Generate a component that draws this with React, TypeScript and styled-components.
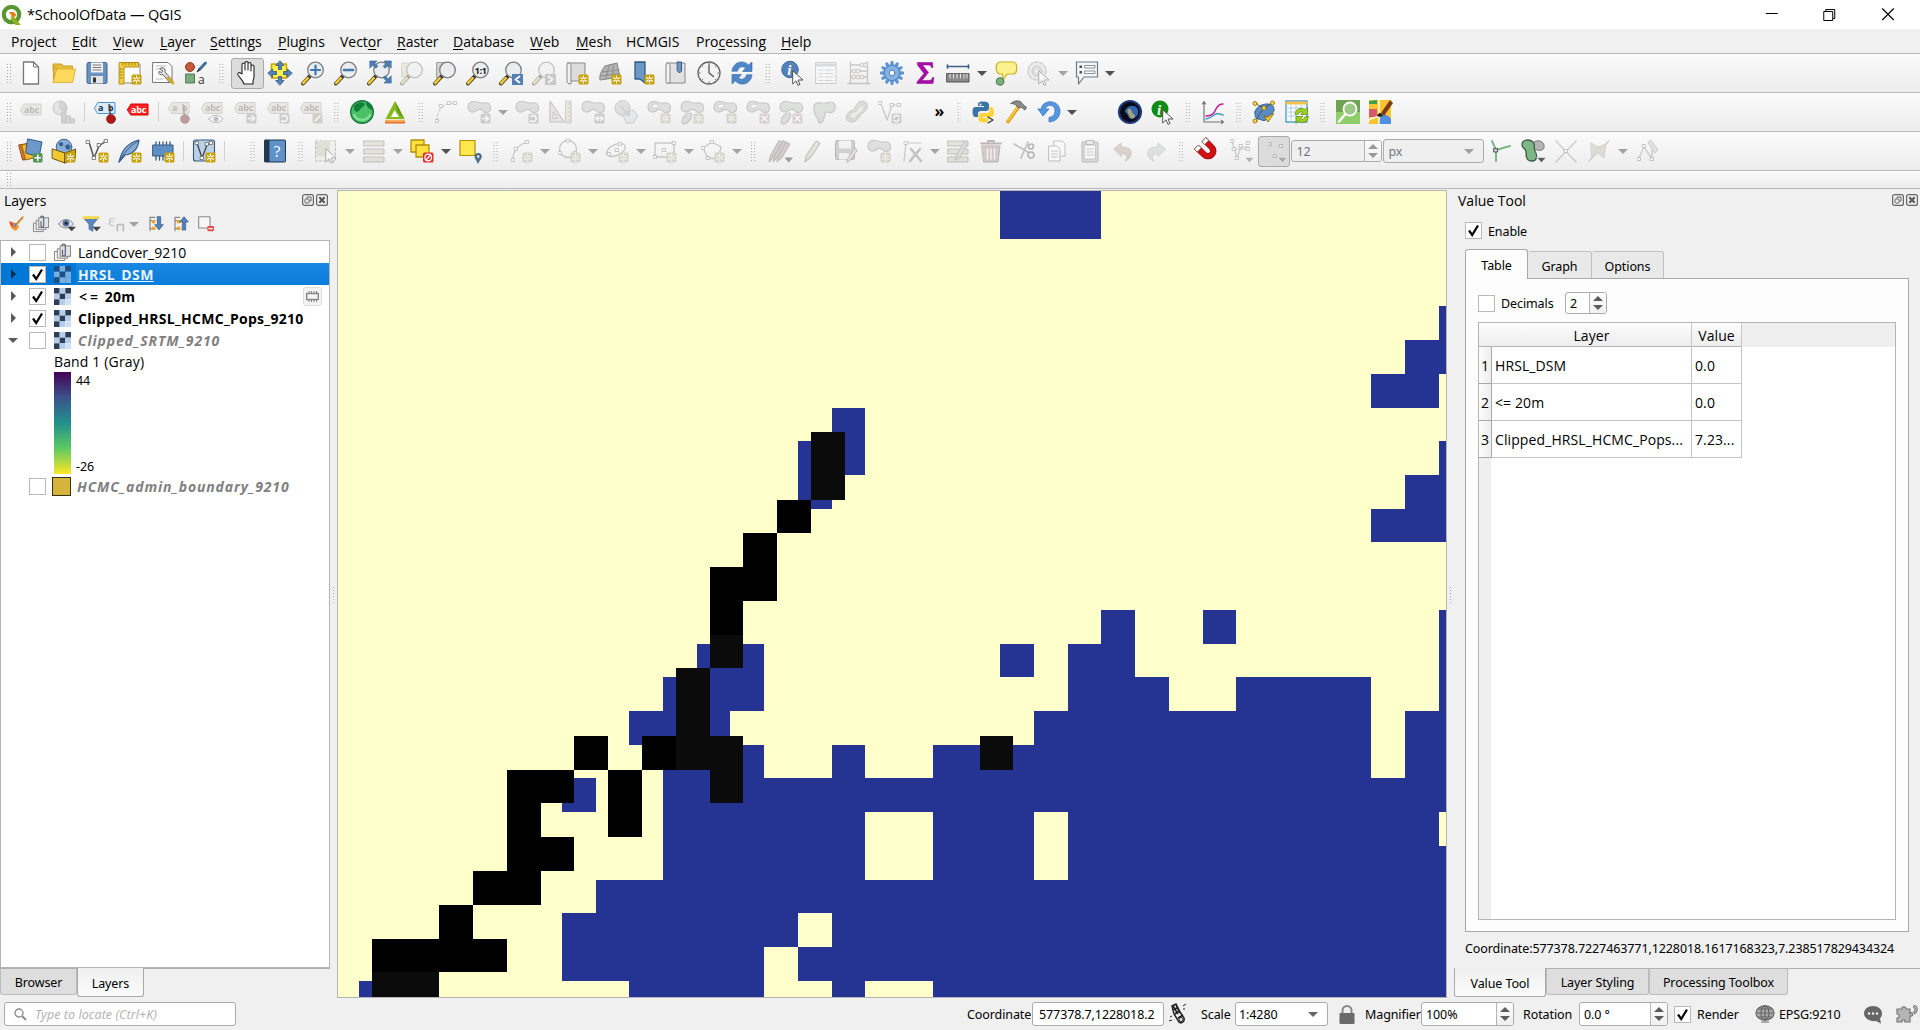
import React from "react";
import styled, { createGlobalStyle, css } from "styled-components";

const GlobalStyle = createGlobalStyle`
  *, *::before, *::after { box-sizing: border-box; }
  html, body { margin: 0; padding: 0; overflow: hidden; background: #f0f0f0; }
  body { font-family: "Open Sans", "Noto Sans", sans-serif; font-size: 14px; color: #000; }
`;

/* ---------- shell ---------- */

const Window = styled.div`
  width: 1920px;
  height: 1030px;
  display: flex;
  flex-direction: column;
  background: #f0f0f0;
  overflow: hidden;
  white-space: nowrap;
`;

const TitleBar = styled.header`
  height: 29px;
  flex: none;
  display: flex;
  align-items: center;
  padding-bottom: 1px;
  background: #fff;
  font-size: 14.5px;
`;
const TitleText = styled.span`
  margin-left: 4px;
  flex: 1;
  letter-spacing: -0.12px;
`;
const WindowControls = styled.div`
  display: flex;
  width: 178px;
  svg { width: 58.5px; height: 28px; flex: none; }
`;

const MenuBar = styled.nav`
  height: 24px;
  flex: none;
  display: flex;
  align-items: center;
  padding: 2px 0 0 11px;
  background: #f0f0f0;
  font-size: 14px;
  line-height: 20px;
`;
const MenuItem = styled.span<{ $w: number }>`
  width: ${(p) => p.$w}px;
  flex: none;
  letter-spacing: -0.02px;
  u { text-underline-offset: 2px; text-decoration-thickness: 1px; }
`;

const ToolBar = styled.div<{ $h: number }>`
  height: ${(p) => p.$h}px;
  flex: none;
  display: flex;
  align-items: center;
  padding-left: 3px;
  border-top: 1px solid #b9b9b9;
  background: linear-gradient(#fbfbfb, #ededed);
`;
const Handle = styled.i<{ $w: number; $h?: number }>`
  width: ${(p) => p.$w}px;
  height: ${(p) => p.$h ?? 20}px;
  flex: none;
  background-image: radial-gradient(circle, #aaa 0.7px, transparent 0.9px);
  background-size: 3px 3px;
  background-position: 0 0;
  background-clip: content-box;
  padding: 0 ${(p) => (p.$w - 5) / 2}px;
`;
const Separator = styled.i<{ $w?: number }>`
  width: ${(p) => p.$w ?? 8}px;
  height: 20px;
  flex: none;
  display: flex;
  justify-content: center;
  &::before { content: ""; width: 1px; background: #d2d2d2; }
`;
const Gap = styled.i<{ $w: number }>`
  width: ${(p) => p.$w}px;
  flex: none;
`;
const Tool = styled.span<{ $pressed?: boolean; $off?: boolean; $w?: number }>`
  width: ${(p) => p.$w ?? 33}px;
  height: 31px;
  flex: none;
  display: flex;
  align-items: center;
  justify-content: center;
  border: 1px solid transparent;
  svg { width: 24px; height: 24px; overflow: visible; opacity: ${(p) => (p.$off ? 0.41 : 1)}; ${(p) => p.$off && "filter: saturate(0.5);"} }
  ${(p) =>
    p.$pressed &&
    css`
      border-color: #aaa;
      border-radius: 3px;
      background: #dcdcdc;
    `}
`;
const ArrowBox = styled.span<{ $w: number; $c: string }>`
  width: ${(p) => p.$w}px;
  flex: none;
  display: flex;
  justify-content: center;
  &::before {
    content: "";
    border: 5px solid transparent;
    border-bottom: 0;
    border-top-color: ${(p) => p.$c};
  }
`;
const More = styled.b`
  width: 22px;
  font-size: 16px;
  line-height: 20px;
  text-align: center;
  padding-bottom: 3px;
`;

/* ---------- icon parts ---------- */

const I = ({ children }: { children: React.ReactNode }) => (
  <svg viewBox="0 0 24 24" fill="none" strokeLinecap="round" strokeLinejoin="round">{children}</svg>
);
const Star = ({ c = "#c8a20a" }: { c?: string }) => (
  <g>
    <rect x="13.5" y="13.5" width="10" height="10" rx="1.5" fill={c} />
    <path d="M18.5 15v7M15.5 16.8l6 3.5M21.5 16.8l-6 3.5" stroke="#fff" strokeWidth="1.2" />
    <circle cx="18.5" cy="18.5" r="1" fill={c} />
  </g>
);
const Badge = ({ c = "#999", d }: { c?: string; d: string }) => (
  <g>
    <rect x="13.5" y="13.5" width="10" height="10" rx="1.5" fill={c} />
    <path d={d} stroke="#fff" strokeWidth="1.6" />
  </g>
);
const ARROW_R = "M15.5 18.5h6M19 16l2.5 2.5L19 21";
const ARROW_LR = "M15 18.5h7M17 16.5l-2 2 2 2M20 16.5l2 2-2 2";
const TURN = "M16 20.5a3 3 0 1 0 0-4M15.6 21.5h2";
const CROSS = "M16 16l5 5M21 16l-5 5";
const PEN = "M16 21l5-5";
const Lens = ({ fill = "#e9edf0", children }: { fill?: string; children?: React.ReactNode }) => (
  <g>
    <path d="M2 22.5l6.5-7" stroke="#333" strokeWidth="4" />
    <path d="M2.2 22l4.6-4.8" stroke="#f5c92a" strokeWidth="2.6" />
    <circle cx="14.5" cy="9" r="7.8" fill={fill} stroke="#7d7d7d" strokeWidth="1.3" />
    {children}
  </g>
);
const Blob = () => (
  <path d="M1 7c0-4 3-6 7-5.500 3 .5 6 2 9 1.500 5-.8 7 2 6.500 6-.5 4-6 4.500-7.500 2-1.500-2-4.500-2-6.500-.5C6 13.500 1 12 1 7z" fill="#bcc2bc" stroke="#868b86" strokeWidth="1.200" />
);
const Ring = () => (
  <g>
    <Blob />
    <path d="M4.500 6.500c0-2 2-2.500 4-2.500s4 1 3 2.500-7 3-7 0z" fill="#f8f8f8" stroke="#868b86" />
  </g>
);
const Lobe = () => <path d="M2 22c0-5 4-9 8-9s0 8-3 10-5 0-5-1z" fill="#bcc2bc" stroke="#868b86" strokeWidth="1.200" />;
const Tag = ({ fill = "#d9d4bb", line = "#a7a187", text = "abc", ink = "#666" }: { fill?: string; line?: string; text?: string; ink?: string }) => (
  <g>
    <path d="M1.500 8l3.500-5.500h17v11H5z" fill={fill} stroke={line} />
    <text x="5" y="11.200" fontSize="9" fontWeight="700" fontFamily="Open Sans" fill={ink} textLength="15.500">{text}</text>
  </g>
);
const Pin = () => (
  <g>
    <path d="M17 6v9" stroke="#444" strokeWidth="1.4" />
    <circle cx="18" cy="19" r="4.500" fill="#b01818" stroke="#7c1010" strokeWidth=".6" />
  </g>
);
const Cursor = () => <path d="M12 10l10 9h-5l2 4.500-2 .8-2-4.500-3 3z" fill="#fff" stroke="#555" />;
const Nodes = ({ pts }: { pts: number[][] }) => (
  <g>{pts.map(([x, y], i) => <rect key={i} x={x - 1.5} y={y - 1.5} width="3" height="3" fill="#fff" stroke="#777" strokeWidth=".9" />)}</g>
);
const Corner = () => <path d="M16 18.500h9l-4.500 5z" fill="#5c5c5c" stroke="#fff" strokeWidth=".5" />;
const teeth = [0, 30, 60, 90, 120, 150, 180, 210, 240, 270, 300, 330];

const icons: Record<string, React.ReactNode> = {
  newFile: <><path d="M4.500 1h10l5 5v17h-15z" fill="#fff" stroke="#777" strokeWidth="1.300" /><path d="M14.500 1v5h5" stroke="#777" /></>,
  open: <><path d="M1.500 3h8l2 2h9v5h-19z" fill="#e6bd3c" stroke="#c99e25" /><path d="M1.500 5v16h2L6 9z" fill="#e6bd3c" stroke="#c99e25" /><path d="M5 8h18.500l-3 13.500h-19z" fill="#ffd95d" stroke="#dfb335" /></>,
  save: <><rect x="2" y="1.500" width="20" height="21" rx="1.500" fill="#6a92c0" stroke="#3e658f" /><rect x="6" y="1.500" width="12" height="10" fill="#f4f4f4" /><path d="M8 4h8M8 6.500h8M8 9h8" stroke="#777" /><rect x="6" y="15" width="12" height="7.500" fill="#e4e4e4" /><rect x="8" y="16.500" width="3" height="5" fill="#333" /></>,
  layout: <><rect x="5" y="3" width="17" height="19" fill="#fff" stroke="#888" /><path d="M1.500 1.500h19v4.500H6v17H1.500z" fill="#f2cf3a" stroke="#b38f12" /><path d="M5 2v2M8 2v2M11 2v2M14 2v2M17 2v2M2 8h2M2 11h2M2 14h2M2 17h2" stroke="#8a6d08" strokeWidth=".8" /><Star /></>,
  layoutMgr: <><path d="M2 1.500h15l4 4v16H2z" fill="#fff" stroke="#777" /><path d="M5 5h10M5 8h4M5 18h7" stroke="#bbb" /><path d="M9 7.500c3-2 6 0 5 3.500l7.500 8.500-2.500 2.500-7-8.500c-3 1-5-1-4-3l2.500 1 1-1.500z" fill="#e2e2e2" stroke="#666" /><path d="M17 17l5 5" stroke="#d9a928" strokeWidth="3" /></>,
  style: <><circle cx="6" cy="6" r="4.500" fill="#c65a3a" stroke="#8c3c22" /><path d="M15.500 8.500l6-6.500" stroke="#48709c" strokeWidth="3" /><path d="M13.500 10.500l1.500-2" stroke="#333" strokeWidth="1.500" /><rect x="2" y="13" width="8.500" height="9" fill="#7cab80" stroke="#4e7a52" /><text x="14" y="22.500" fontSize="12" fontFamily="Open Sans" fill="#333">a</text></>,
  hand: <path d="M7 13L7 3.500c0-2 3-2 3 0V9V2c0-2 3-2 3 0v7V3c0-2 3-2 3 0v7V5.500c0-2 3-2 3 0V16c0 2-1 3-1 4v3H9c-1-4-4-6-6-9-1-2 1-3 2.500-2z" fill="#fff" stroke="#222" strokeWidth="1.100" />,
  panSel: <><rect x="3.500" y="3" width="15" height="14" fill="#fff04a" stroke="#cba100" strokeWidth="1.500" /><path d="M12 0l4 4.500h-2.500v4h-3v-4H8zM12 24l4-4.500h-2.500v-4h-3v4H8zM0 12l4.500-4v2.500h4v3h-4V16zM24 12l-4.500-4v2.500h-4v3h4V16z" fill="#5583b9" stroke="#2d5687" strokeWidth=".8" /></>,
  zoomIn: <Lens><path d="M14.500 4.500v9M10 9h9" stroke="#4477ad" strokeWidth="2.200" /></Lens>,
  zoomOut: <Lens><path d="M10 9h9" stroke="#4477ad" strokeWidth="2.600" /></Lens>,
  zoomFull: <><Lens /><path d="M3 0h7l-2.200 2.200 3 3-2 2-3-3L3 7zM24 0h-7l2.200 2.200-3 3 2 2 3-3L24 7zM24 22h-7l2.200-2.200-3-3 2-2 3 3L24 15z" fill="#4f7fb6" stroke="#2f5b8e" strokeWidth=".6" /></>,
  zoomSel: <><rect x="2" y="2" width="11" height="14" fill="#e2d98c" stroke="#aaa" /><Lens /></>,
  zoomLayer: <><rect x="4" y="1.500" width="13" height="15" fill="#d4d4d4" stroke="#999" /><Lens /></>,
  zoomNative: <Lens><text x="8.500" y="12.500" fontSize="9.500" fontWeight="700" fontFamily="Open Sans" fill="#222" textLength="12.500">1:1</text></Lens>,
  zoomLast: <><Lens /><rect x="13" y="13" width="11" height="11" fill="#4f7fb6" /><path d="M20.500 15.500l-4 3 4 3" stroke="#fff" strokeWidth="1.800" /></>,
  zoomNext: <><Lens /><rect x="13" y="13" width="11" height="11" fill="#8f8f8f" /><path d="M16.500 15.500l4 3-4 3" stroke="#fff" strokeWidth="1.800" /></>,
  newMap: <><path d="M3 2h17v18H3z" fill="#dcdcdc" stroke="#8b8b8b" /><path d="M3 2c3 0 3 2 3 3v18c-3 0-4-1-4-3V4c0-1 0-2 1-2z" fill="#f0f0f0" stroke="#8b8b8b" /><Star /></>,
  new3d: <><path d="M7 5l12-3 3 14-20 3c-1-4 1-9 5-14z" fill="#b4b4b4" stroke="#858585" /><path d="M4 11l17-2M2.500 15l19-2.500M11 4L8 18M15 3v13" stroke="#858585" strokeWidth=".8" /><Star /></>,
  bookmark: <><path d="M4 1h10v21l-5-4-5 0z" fill="#6d97c7" stroke="#34587f" strokeWidth="1.300" /><Star /></>,
  bookmarks: <><path d="M3 2h18v20H3z" fill="#e2e2e2" stroke="#888" /><path d="M3 2c3 0 3 2 3 3v17H3c-1 0-1-1-1-2V4z" fill="#f2f2f2" stroke="#888" /><path d="M13.500 1h4v9l-2 2-2-2z" fill="#6d97c7" stroke="#34587f" /></>,
  clock: <><circle cx="12" cy="12" r="11" fill="#f3f3f3" stroke="#666" strokeWidth="1.300" /><path d="M12 4v8l4.500 3.500" stroke="#555" strokeWidth="1.300" /><path d="M12 2.500v.5M21 12h.5M12 21v.5M2.500 12h.5M5.500 5.500l.3.300M18.500 5.500l-.3.300M5.500 18.500l.3-.3M18.500 18.500l-.3-.3" stroke="#555" /></>,
  refresh: <><path d="M2 10c1-9 11-12 16.500-6L22 1v9.500h-9.500l3-3.500c-3-2.500-7-1-8 3z" fill="#4f87c7" stroke="#2d66a8" strokeWidth=".6" /><path d="M22 14c-1 9-11 12-16.500 6L2 23v-9.500h9.500l-3 3.500c3 2.500 7 1 8-3z" fill="#4f87c7" stroke="#2d66a8" strokeWidth=".6" /></>,
  identify: <><circle cx="9" cy="8.500" r="8.300" fill="#5482b8" stroke="#416d9f" /><text x="6.200" y="14" fontSize="15" fontWeight="700" fontStyle="italic" fontFamily="Liberation Serif" fill="#fff">i</text><Cursor /></>,
  table: <><rect x="2" y="1.500" width="20" height="21" fill="#fff" stroke="#999" /><path d="M3 4h18" stroke="#aab8c8" strokeWidth="3" /><path d="M5 9h4M5 12.500h4M5 16h4M5 19.500h4M11 9h8M11 12.500h8M11 16h8M11 19.500h8" stroke="#aaa" /></>,
  abacus: <><path d="M3.500 1v21M20.500 1v21M1 22.500h22M3.500 4h17M3.500 10h17M3.500 16h17" stroke="#888" strokeWidth="1.300" /><g fill="#eee" stroke="#a77"><circle cx="15" cy="4" r="2" /><circle cx="18.500" cy="4" r="2" /><circle cx="7" cy="10" r="2" /><circle cx="11" cy="10" r="2" /><circle cx="7" cy="16" r="2" /><circle cx="11" cy="16" r="2" /><circle cx="15" cy="16" r="2" /></g></>,
  gear: <><g fill="#6093d1">{teeth.map((a) => <path key={a} d="M10.800 0h2.400l1 5.500h-4.400z" transform={`rotate(${a} 12 12)`} />)}</g><circle cx="12" cy="12" r="7.600" fill="#86b1e2" stroke="#4f86c8" /><circle cx="12" cy="12" r="2.800" fill="#fff" stroke="#4d83c3" /></>,
  sigma: <path d="M4.500 1.500h15l.5 5h-1.500c-.5-2-1.500-2.500-3.500-2.500H9.500l6 7.500-6.500 8h7c2 0 3-1 3.500-3H21l-1 6H4v-1.500l7-8.500-6.500-8.500z" fill="#a80da8" stroke="#8a078a" strokeWidth=".5" />,
  measure: <><path d="M1.500 5.500h21M1.500 4v3M22.500 4v3" stroke="#3d5f88" strokeWidth="1.700" /><rect x="1" y="12.500" width="22" height="8.500" fill="#8a8a8a" stroke="#555" /><path d="M4 13v4M7.500 13v4M11 13v4M14.500 13v4M18 13v4M21 13v4" stroke="#eee" strokeWidth=".9" /></>,
  tips: <><path d="M6 1h13c5 0 5 12 0 12h-6l-4 6-.5-6H6C1 13 1 1 6 1z" fill="#fbf18e" stroke="#c8b21c" strokeWidth="1.200" /><circle cx="6" cy="20.500" r="3.800" fill="#78ad7c" stroke="#4e7c52" /></>,
  action: <><circle cx="10" cy="10" r="9" fill="#ddd" stroke="#999" strokeWidth="1.500" strokeDasharray="3 2" /><circle cx="10" cy="10" r="5" fill="#bbb" stroke="#999" /><path d="M8.500 7.500l4 2.500-4 2.500z" fill="#fff" /><Cursor /></>,
  annot: <><path d="M1.500 1h21v15H9l-5.500 7v-7h-2z" fill="#f5f6f7" stroke="#6c7a86" strokeWidth="1.200" /><rect x="4.500" y="4.500" width="2.500" height="2.500" fill="#456" /><rect x="4.500" y="10" width="2.500" height="2.500" fill="#456" /><path d="M10 4.500h10v2.500H10zM10 10h10v2.500H10z" fill="#fff" stroke="#6c7a86" strokeWidth=".8" /></>,

  tag: <g transform="translate(0 1.500)"><Tag /></g>,
  diagram: <><circle cx="8" cy="8" r="7" fill="#c3cfc3" stroke="#888" /><path d="M8 8V1a7 7 0 0 1 6 10z" fill="#c99" stroke="#888" /><path d="M10 12h4v11h-4z" fill="#c99" stroke="#888" /><path d="M14.500 16h4v7h-4z" fill="#9ab29a" stroke="#888" /><path d="M19 19h3.500v4H19z" fill="#b9b9a0" stroke="#888" /></>,
  tagPin: <><g><Tag fill="#d9ecff" line="#4d93d2" text="ab" ink="#234" /></g><Pin /></>,
  tagRed: <g transform="translate(0 1.500)"><Tag fill="#f22" line="#d00" ink="#fff" /></g>,
  tagPinOff: <><Tag text="ab" /><Pin /></>,
  tagEye: <><Tag /><path d="M9 19c4-5 10-5 14 0-4 5-10 5-14 0z" fill="#fff" stroke="#666" /><circle cx="16" cy="19" r="2.500" fill="#678" /></>,
  tagMove: <><Tag /><Badge d={ARROW_R} /></>,
  tagTurn: <><Tag /><Badge d={TURN} /></>,
  tagEdit: <><Tag /><Badge c="#a99f80" d={PEN} /></>,
  globeGreen: <><circle cx="12" cy="12" r="11.300" fill="#4cc067" stroke="#12783a" strokeWidth="1.400" /><path d="M4 6c3-4 9-5 11-2-1 3-4 3-6 7-3 2-6-1-5-5zM16 1.800c4 2 6 5 6 8-3 0-6-4-6-8z" fill="#0f7f3a" /><path d="M4 15c3 6 12 7 16 0" stroke="#7fdf92" strokeWidth="2.500" /></>,
  triangle: <><path d="M12 1l9.500 18h-19z" fill="#86b91c" /><path d="M11.500 10l4.500 7H8z" fill="#fff" /><path d="M12 1l3 12 6.500 6z" fill="#5f9a16" /><path d="M2 20.500h20" stroke="#f8b054" strokeWidth="1.500" strokeLinecap="butt" /><path d="M2 22.500h20" stroke="#e8701c" strokeWidth="2" strokeLinecap="butt" /></>,
  curve: <><path d="M3 21c0-10 4-17 17-18" stroke="#888" strokeDasharray="3 2" /><Nodes pts={[[3, 21], [7, 6], [15, 3], [21, 3]]} /></>,
  moveFeat: <><Blob /><Badge d={ARROW_R} /></>,
  turnFeat: <><Blob /><Badge d={TURN} /></>,
  setSquare: <><path d="M2 1l14 21H2z" fill="#ddd3cc" stroke="#8a7f78" strokeWidth="1.200" /><path d="M5.500 12l4 6.500h-4z" fill="#f4f4f4" stroke="#8a7f78" /><path d="M18 1h5v22h-5z" fill="#ddd9b8" stroke="#99927a" /><path d="M20.500 4H23M20.500 8H23M20.500 12H23M20.500 16H23M20.500 20H23" stroke="#99927a" /></>,
  scaleFeat: <><Blob /><Badge d={ARROW_LR} /></>,
  simplify: <><circle cx="8.500" cy="8" r="7.500" fill="#bcc2bc" stroke="#868b86" /><path d="M12 12l8-2 3.500 6-4 7h-7l-3-6z" fill="#d0dbe6" stroke="#8a95a0" /><path d="M7 7l8 8M15 12v3h-3" stroke="#777" /></>,
  addRing: <><Ring /><Star c="#b5ab80" /></>,
  addPart: <><Blob /><Lobe /><Star c="#b5ab80" /></>,
  delRing: <><Ring /><Badge c="#c89aa2" d={CROSS} /></>,
  delPart: <><Blob /><Lobe /><Badge c="#c89aa2" d={CROSS} /></>,
  reshape: <><path d="M2 7c0-4 4-5 8-4s6-1 9-1 5 3 4 7-5 4-8 3-2 10-6 11-2-5-4-6-3-5-3-10z" fill="#bcc2bc" stroke="#868b86" strokeWidth="1.200" /></>,
  offset: <><path d="M14 2c5-3 10 1 8 6s-5 4-7 8-8 8-12 5-1-9 3-10 5-7 8-9z" fill="#b8bea0" stroke="#868b76" /><path d="M15 6c3-2 5 0 4 3s-4 3-6 6-4 5-7 3 0-6 3-6 4-4 6-6z" fill="#dde0cf" stroke="#9a9f8a" /></>,
  split: <><path d="M3 4l6 16 5-15h8" stroke="#888" strokeWidth="1.200" /><Nodes pts={[[2, 3], [14, 5], [21, 5]]} /><Badge d="M16 18a2.800 2.800 0 0 1 5-1.500M21 19a2.800 2.800 0 0 1-5 1.500" /></>,
  python: <><path d="M12 1.500c-5 0-5 1.500-5 4.500h6v1H4.500C2 7 1.500 9 1.500 12s1 5 3 5H7v-3c0-2 1-3 3-3h5c2 0 3-1 3-3V5c0-2.500-2-3.500-6-3.500z" fill="#3a74a8" /><path d="M12.500 22.500c5 0 5-1.500 5-4.500h-6v-1H20c2.500 0 3-2 3-5s-1-5-3-5h-1.500v3c0 2-1 3-3 3h-5c-2 0-3 1-3 3v3c0 2.500 2 3.500 5 3.500z" fill="#ffd43b" /><circle cx="9.500" cy="4.500" r="1" fill="#fff" /><path d="M17 17l5 3-5 3" stroke="#333" strokeWidth="1.200" /></>,
  hammer: <><path d="M4 21.500L14 7.500" stroke="#d99a0c" strokeWidth="3.600" /><path d="M4 21L13.500 7.500" stroke="#f9c93d" strokeWidth="1.800" /><path d="M7 3.500c3-3 7-3.500 10-1.500l2 2.500 3.500 3-1.500 2.500-4-3-2 1-3-2.500c-1-1.500-3-2-5-2z" fill="#8a8a8a" stroke="#444" strokeWidth=".7" /></>,
  reload: <path d="M1 9l5 7 6-7H8.500c1-5 9-5 9.500 1 .3 5-3 7-6 7.500v4.500c6-.5 11-4 11-11C23 0 6 -2 4 9z" fill="#5596e0" stroke="#2f72c2" strokeWidth=".7" />,
  earth: <><circle cx="12" cy="12" r="11" fill="#070b14" stroke="#22387c" strokeWidth="2.200" /><path d="M8 9c3-4 9-4 11-1 3 5 0 10-5 11-4 0-3-3-5-5s-3-3-1-5z" fill="#2f66ad" /><path d="M10 9c2-1 4 1 4 3s3 2 3 4-3 3-4 2-5-7-3-9z" fill="#a8a275" /></>,
  infoGreen: <><circle cx="9" cy="9" r="8.500" fill="#0f8a14" /><text x="6" y="14.500" fontSize="15" fontWeight="700" fontStyle="italic" fontFamily="Liberation Serif" fill="#fff">i</text><Cursor /></>,
  profile: <><path d="M3 2v20h19M1.500 4L3 1.500 4.500 4M20.500 20.500L22.500 22l-2 1.500" stroke="#777" strokeWidth="1.200" /><path d="M5 16c7 0 8-3 10-7s4-5 7-5" stroke="#c0219a" strokeWidth="1.600" /><path d="M5 19c6-1 7-4 10-5s4 0 7 1" stroke="#3a9fb5" strokeWidth="1.400" /></>,
  topoEdit: <><path d="M3 12c1-5 7-8 12-8s7 2 7 6-5 3-7 8-6 1-9 1-3-4-3-7z" fill="#5b8bc4" stroke="#2f5e96" /><path d="M3 3.500l9 4.500 8.500-5M3 21l9-13" stroke="#444" strokeWidth=".8" /><g fill="#f7d94a" stroke="#a07c10"><circle cx="3" cy="3.500" r="2" /><circle cx="20.500" cy="3" r="2" /><circle cx="12" cy="8" r="2" /><circle cx="3" cy="21" r="2" /></g><path d="M12 16l4 6 6-9-6 4z" fill="#f4cc2c" stroke="#7a5c08" strokeWidth=".8" /></>,
  tableSync: <><rect x="1" y="1" width="21" height="21" fill="#fff" stroke="#4b9fcb" strokeWidth="1.400" /><path d="M2 3h19" stroke="#f5c04a" strokeWidth="3" /><path d="M1 8h21M1 12h21M1 16h12M6 5v17M11 5v17M16 5v8" stroke="#a9cfe4" /><path d="M10 14c1-6 7-7 10-4l2.500-2.500v7h-7l2.500-2.500c-2-1-4 0-4.500 2zM23.500 17c-1 6-7 7-10 4L11 23.500v-7h7L15.500 19c2 1 4 0 4.500-2z" fill="#9ed01c" stroke="#5a8a0c" strokeWidth=".7" /></>,
  osmSearch: <><rect width="24" height="24" fill="#6fa551" /><path d="M0 12h24v12H0z" fill="#8fcd6b" /><path d="M3 21.500l6-7" stroke="#fff" strokeWidth="2.600" /><circle cx="14" cy="9" r="6.500" fill="#9cc786" stroke="#fff" strokeWidth="1.800" /></>,
  osmEdit: <><rect width="22" height="24" fill="#f8c430" /><path d="M0 1l8-1v4H0z" fill="#3da24b" /><path d="M0 9h8v8H0z" fill="#d85a6a" /><path d="M12 16c4-3 8 0 10 3v5H9z" fill="#4f8fe0" /><path d="M0 20c6-5 10 0 18-10M10 0v24" stroke="#fff" strokeWidth="1.400" /><path d="M12 13l3 3 9-13-3-3z" fill="#7c3a12" /><path d="M8 16c1-3 3-4 5-2s-1 4-5 2z" fill="#222" /></>,

  dataSource: <><path d="M0 6l11-2 3 15-10 2z" fill="#d8702a" stroke="#8f4412" /><path d="M3 6l12-3 2 15-10 3z" fill="#f2bb2f" stroke="#97700f" /><path d="M9 0l14 3-3 15-13-4z" fill="#6c98c9" stroke="#34587f" /><rect x="14" y="14" width="9.500" height="9.500" rx="1.500" fill="#53935a" /><path d="M18.800 16v5.500M16 18.800h5.500" stroke="#fff" strokeWidth="1.500" /></>,
  geopackage: <><circle cx="12" cy="8" r="7.800" fill="#86aedb" stroke="#3d6591" /><path d="M7 4c3-2 5 0 4 2s-4 2-4-2zM13 7c3-3 6-1 5 2s-4 2-5-2z" fill="#365b84" /><path d="M0.500 10l12.500 4v10L0.500 19.500z" fill="#f0c92d" stroke="#6d560b" /><path d="M13 14l10.500-4v9L13 24z" fill="#d2a612" stroke="#6d560b" /><Star /></>,
  newShape: <><path d="M4 3l5 16 5-12 7-5" stroke="#555" strokeWidth="1.500" /><Nodes pts={[[3, 3], [9, 19], [14, 6], [21, 2]]} /><Star /></>,
  newSpatialite: <><path d="M1 23c2-8 5-18 20-22-1 9-6 14-14 15z" fill="#85abd6" stroke="#365b84" strokeWidth="1.200" /><path d="M1 23C6 13 12 7 20 2" stroke="#365b84" /><Star /></>,
  newMemory: <><path d="M5 3v18M8.500 3v18M12 3v18M15.500 3v18M19 3v18" stroke="#34587f" strokeWidth="1.300" /><rect x="2" y="6" width="20" height="11" fill="#5f8ec4" stroke="#34587f" /><Star /></>,
  newVirtual: <><rect x="1.500" y="1" width="21" height="21" rx="2" fill="#bcd0e8" stroke="#34587f" strokeWidth="1.100" /><path d="M5 4l5 15 5-13 4-2" stroke="#444" strokeWidth="1.300" /><Nodes pts={[[5, 4], [10, 19], [15, 5], [19, 4]]} /><Star /></>,
  help: <><rect x="1.500" y="1" width="21" height="22" rx="1" fill="#5f92c9" stroke="#22384f" /><rect x="1.500" y="1" width="5" height="22" fill="#22384f" /><text x="10.500" y="17.500" fontSize="16" fontFamily="Liberation Serif" fill="#fff">?</text></>,
  select: <><rect x="1.500" y="2" width="20" height="20" fill="#e9e9e0" stroke="#777" strokeDasharray="2.500 2" /><rect x="2" y="3" width="14" height="14" fill="#c8c49a" /><Cursor /></>,
  selectVal: <><path d="M2 2h20v5H2zM2 10h20v5H2zM2 18h20v5H2z" fill="#cfcba4" stroke="#7d7b66" /></>,
  deselect: <><rect x="1" y="1" width="13" height="12" fill="#ffe13d" stroke="#b08e0c" strokeWidth="1.300" /><rect x="6" y="6" width="13" height="12" fill="#ffe13d" stroke="#b08e0c" strokeWidth="1.300" /><rect x="13" y="13.500" width="10.500" height="10" rx="1.500" fill="#e03030" /><circle cx="18.200" cy="18.500" r="3.300" stroke="#fff" strokeWidth="1.200" /><path d="M16 21l4.500-5" stroke="#fff" strokeWidth="1.200" /></>,
  selectLoc: <><rect x="2" y="1.500" width="15" height="15" fill="#ffe84d" stroke="#b08e0c" strokeWidth="1.200" /><path d="M20 24c-1.500-3-3-4-3-6.500a3.200 3.200 0 0 1 6.400 0c0 2.500-2 3.500-3.400 6.500z" fill="#4f7193" stroke="#33506c" strokeWidth=".6" /><circle cx="20.200" cy="17.500" r="1.200" fill="#fff" /></>,
  digCurve: <><path d="M4 21c0-9 5-15 14-18" stroke="#888" strokeWidth="1.300" /><Nodes pts={[[4, 21], [7, 10], [18, 3]]} /><Star c="#b5ab80" /></>,
  digCircle: <><circle cx="11" cy="10" r="8.500" stroke="#888" strokeWidth="1.400" /><Nodes pts={[[11, 1.5], [3, 14], [18, 14]]} /><Star c="#b5ab80" /></>,
  digEllipse: <><ellipse cx="11" cy="11" rx="10" ry="5.500" transform="rotate(-25 11 11)" stroke="#888" strokeWidth="1.400" /><Nodes pts={[[4, 15], [12, 11], [15, 5]]} /><Star c="#b5ab80" /></>,
  digRect: <><rect x="2" y="4" width="19" height="14" stroke="#888" strokeWidth="1.400" /><Nodes pts={[[21, 4], [2, 18], [11, 11]]} /><Star c="#b5ab80" /></>,
  digPoly: <><path d="M2 9l9-6 9 5-3 12-10-1z" stroke="#888" strokeWidth="1.400" /><Nodes pts={[[11, 3], [2, 9], [7, 19]]} /><Star c="#b5ab80" /></>,
  edits: <><g fill="#b98f8f" stroke="#6d6060"><path d="M1 22.500l1.500-6L11 1.500l4 2-9 14.500z" /><path d="M5 22.500l1.500-6L15 1.500l4 2-9 14.500z" /><path d="M9 22.500l1.500-6L18 3l4 2-8 13.500z" /></g><path d="M16.500 18.500h8.500l-4.200 5z" fill="#222" /></>,
  pencil: <path d="M4 22.500l1.500-6L15 2l4 2.500-9.500 14z" fill="#d9cf9c" stroke="#777" strokeWidth="1.200" />,
  saveEdits: <><rect x="1.500" y="1.500" width="19" height="19" rx="1.500" fill="#a0a0a0" stroke="#666" /><rect x="5" y="1.500" width="12" height="8" fill="#eee" /><rect x="5" y="14" width="10" height="6.500" fill="#eee" /><path d="M13 23l1-4 7-10 2.500 2-7 10z" fill="#dba" stroke="#777" /></>,
  addFeat: <><Blob /><Star c="#b5ab80" /></>,
  vertex: <><path d="M4 22l2-18h15" stroke="#888" strokeWidth="1.200" /><Nodes pts={[[6, 4]]} /><path d="M10 22l10-12M11 10l10 12" stroke="#8c7f70" strokeWidth="2.600" /></>,
  attrEdit: <><path d="M2 2h20v5H2zM2 10h20v5H2zM2 18h20v5H2z" fill="#c8cba0" stroke="#7d7b66" /><path d="M9 21l1.500-5L19 2l3 2-8 14z" fill="#bbb" stroke="#777" /></>,
  trash: <><path d="M3 7h18l-2 16H5z" fill="#c08a8a" stroke="#855" /><path d="M2 4.500h20M9 4V2h6v2" stroke="#855" strokeWidth="1.800" /><path d="M8.500 10v10M12 10v10M15.500 10v10" stroke="#fff" strokeWidth="1.300" /></>,
  cut: <><path d="M2 6l14 8M9 20l7-16" stroke="#777" strokeWidth="1.700" transform="translate(0 -1)" /><circle cx="19" cy="16" r="3" stroke="#755" strokeWidth="1.600" /><circle cx="19" cy="7.500" r="2.500" stroke="#755" strokeWidth="1.600" /></>,
  copy: <><path d="M9 2h8l3 3v12H9z" fill="#fff" stroke="#777" /><path d="M4 7h8l3 3v12H4z" fill="#fff" stroke="#777" /><path d="M6.500 12h6M6.500 15h6M6.500 18h6" stroke="#888" /></>,
  paste: <><rect x="4" y="3" width="16" height="20" rx="1" fill="#bbb" stroke="#666" /><rect x="6.500" y="6" width="11" height="14" fill="#fff" stroke="#888" /><rect x="8.500" y="1.500" width="7" height="4" fill="#ddd" stroke="#666" /><path d="M8.500 10h7M8.500 13h7M8.500 16h7" stroke="#888" /></>,
  undo: <path d="M3 10l7-6v4c7 0 11 2 10 8-1 3-3 5-6 6 3-4 3-7-4-7.500V17z" fill="#c9a08c" stroke="#a58678" />,
  redo: <path d="M21 10l-7-6v4C7 8 3 10 4 16c1 3 3 5 6 6-3-4-3-7 4-7.500V17z" fill="#b8cfc0" stroke="#8aa596" />,
  magnet: <g transform="rotate(-45 12 12)"><path d="M4 1h5.500v11a2.500 2.500 0 0 0 5 0V1H20v11a8 8 0 0 1-16 0z" fill="#d40f0f" stroke="#8e0606" strokeWidth=".8" /><path d="M4 1h5.500v4H4zM14.500 1H20v4h-5.500z" fill="#fff" stroke="#777" strokeWidth=".8" /></g>,
  snapV: <><path d="M3 2l5 17L12 8h7M8 10h10" stroke="#888" strokeWidth="1.200" /><Nodes pts={[[3, 2], [5, 10], [8, 19], [12, 7], [19, 4], [19, 10]]} /><Corner /></>,
  snapDots: <><Nodes pts={[[8, 5], [19, 7], [13, 17]]} /><Corner /></>,
  topo: <><path d="M4 2l4 9v11M8 11l14-4" stroke="#7db787" strokeWidth="2" /><rect x="6" y="9.500" width="3.500" height="3.500" fill="#ccc" stroke="#555" /></>,
  overlap: <><path d="M12 5c1-5 10-4 11 1s-3 6-7 5-5-3-4-6z" fill="#b5b5b5" stroke="#777" /><path d="M1 6c0-6 8-6 11-3s0 6 2 9 3 10-3 10-6-5-6-9-4-3-4-7z" fill="#7db787" stroke="#3f5c44" strokeWidth="1.300" /><Corner /></>,
  snapX: <><path d="M2 2l20 21M22 2L2 23" stroke="#999" strokeWidth="1.600" /><Nodes pts={[[12, 12]]} /></>,
  trace: <><path d="M2 22L22 2" stroke="#999" strokeWidth="1.600" /><path d="M4 4l7 4 8-3-2 14-6-5-6 4z" fill="#c5b98e" stroke="#aaa27f" /></>,
  selfSnap: <><path d="M4 20V19L9 8l8 12V8" stroke="#999" strokeWidth="1.500" /><path d="M13 3l3-2 7 10-3 3z" fill="#cfc6a8" stroke="#999" /><Nodes pts={[[4, 20], [9, 7], [17, 20]]} /></>,
};

type Item =
  | { t: "tool"; n: string; off?: boolean; on?: boolean; w?: number }
  | { t: "handle" | "sep" | "gap"; w: number }
  | { t: "arrow"; w: number; off?: boolean }
  | { t: "more" }
  | { t: "snapBoxes" };
const T = (...names: string[]): Item[] => names.map((n) => ({ t: "tool", n }));
const D = (...names: string[]): Item[] => names.map((n) => ({ t: "tool", n, off: true }));
const H = (w: number): Item => ({ t: "handle", w });
const S = (w: number): Item => ({ t: "sep", w });
const G = (w: number): Item => ({ t: "gap", w });
const A = (w: number, off = false): Item => ({ t: "arrow", w, off });

const row1: Item[] = [
  H(11), ...T("newFile", "open", "save", "layout", "layoutMgr", "style"), H(18.5),
  { t: "tool", n: "hand", on: true }, ...T("panSel", "zoomIn", "zoomOut", "zoomFull"), ...D("zoomSel"),
  ...T("zoomLayer", "zoomNative", "zoomLast"), ...D("zoomNext"), ...T("newMap", "new3d", "bookmark", "bookmarks", "clock", "refresh"),
  H(17.5), ...T("identify"), ...D("table", "abacus"), ...T("gear", "sigma", "measure"), A(15), ...T("tips"), ...D("action"), A(15, true), ...T("annot"), A(14),
];
const row2: Item[] = [
  H(11), ...D("tag", "diagram"), S(8), ...T("tagPin", "tagRed"), S(8), ...D("tagPinOff", "tagEye", "tagMove", "tagTurn", "tagEdit"), H(18.5),
  ...T("globeGreen", "triangle"), H(17.5), ...D("curve", "moveFeat"), A(15, true),
  ...D("turnFeat", "setSquare", "scaleFeat", "simplify", "addRing", "addPart", "addRing", "delRing", "delPart", "reshape", "offset", "split"),
  G(22.5), { t: "more" }, H(15.5), ...T("python", "hammer", "reload"), A(13), G(35), ...T("earth", "infoGreen"), H(17.5), ...T("profile"), H(18),
  ...T("topoEdit", "tableSync"), H(18), ...T("osmSearch", "osmEdit"),
];
const row3: Item[] = [
  H(11), ...T("dataSource", "geopackage", "newShape", "newSpatialite", "newMemory"), S(8), ...T("newVirtual"), S(9), G(17), H(12), ...T("help"), H(18),
  ...D("select"), A(15, true), ...D("selectVal"), A(15, true), ...T("deselect"), A(15), ...T("selectLoc"), H(18),
  ...D("digCurve"), A(15, true), ...D("digCircle"), A(15, true), ...D("digEllipse"), A(15, true), ...D("digRect"), A(15, true), ...D("digPoly"), A(15, true), H(19),
  ...D("edits", "pencil", "saveEdits", "addFeat", "vertex"), A(13, true), ...D("attrEdit", "trash", "cut", "copy", "paste", "undo", "redo"), H(19.5),
  ...T("magnet"), ...D("snapV"), { t: "tool", n: "snapDots", on: true, off: true, w: 32 }, { t: "snapBoxes" }, ...T("topo", "overlap"),
  ...D("snapX", "trace"), A(15, true), ...D("selfSnap"),
];

/* ---------- form parts ---------- */

const small = css`
  font-family: "Noto Sans", "Open Sans", sans-serif;
  font-size: 12.5px;
  letter-spacing: -0.1px;
`;
const Field = styled.div<{ $w: number; $h?: number; $off?: boolean }>`
  ${small}
  width: ${(p) => p.$w}px;
  height: ${(p) => p.$h ?? 24}px;
  flex: none;
  display: flex;
  align-items: center;
  border: 1px solid #ababab;
  border-radius: 3px;
  background: ${(p) => (p.$off ? "#efefef" : "#fff")};
  color: ${(p) => (p.$off ? "#6f7684" : "#000")};
  overflow: hidden;
`;
const FieldText = styled.span<{ $pad: number; $hint?: boolean }>`
  flex: 1;
  padding-left: ${(p) => p.$pad}px;
  ${(p) => p.$hint && "color: #b4b4b4; font-style: italic; letter-spacing: 0.05px;"}
`;
const SpinButtons = styled.span<{ $w?: number }>`
  width: ${(p) => p.$w ?? 17}px;
  height: 100%;
  flex: none;
  display: flex;
  flex-direction: column;
  align-items: center;
  justify-content: center;
  gap: 4px;
  border-left: 1px solid #b5b5b5;
  background: linear-gradient(#fcfcfc, #f0f0f0);
`;
const Tri = styled.i<{ $up?: boolean; $c?: string }>`
  border: 5px solid transparent;
  ${(p) => (p.$up ? "border-top: 0; border-bottom-color" : "border-bottom: 0; border-top-color")}: ${(p) => p.$c ?? "#5c5c5c"};
`;
const Spin = ({ w, h, text, pad = 5, off, bw }: { w: number; h?: number; text: string; pad?: number; off?: boolean; bw?: number }) => (
  <Field $w={w} $h={h} $off={off}>
    <FieldText $pad={pad}>{text}</FieldText>
    <SpinButtons $w={bw}>
      <Tri $up $c={off ? "#999" : undefined} />
      <Tri $c={off ? "#999" : undefined} />
    </SpinButtons>
  </Field>
);
const SnapBoxes = styled.div`
  display: flex;
  align-items: center;
  gap: 1px;
  padding-left: 1px;
  width: 194px;
  flex: none;
`;

const Box = styled.span`
  width: 17px;
  height: 17px;
  flex: none;
  border: 1px solid #b9b9b9;
  background: #fff;
  display: flex;
  align-items: center;
  justify-content: center;
`;
const Check = ({ on }: { on?: boolean }) => (
  <Box>
    {on && (
      <svg width="13" height="13" viewBox="0 0 13 13" fill="none">
        <path d="M2 6.500l3.200 4.500L11 1.500" stroke="#000" strokeWidth="2.200" />
      </svg>
    )}
  </Box>
);

const ToolItem = ({ it }: { it: Item }) => {
  switch (it.t) {
    case "tool": return <Tool $off={it.off} $pressed={it.on} $w={it.w}><I>{icons[it.n]}</I></Tool>;
    case "handle": return <Handle $w={it.w} />;
    case "sep": return <Separator $w={it.w} />;
    case "gap": return <Gap $w={it.w} />;
    case "arrow": return <ArrowBox $w={it.w} $c={it.off ? "#a3a3a3" : "#505050"} />;
    case "more": return <More>»</More>;
    case "snapBoxes":
      return (
        <SnapBoxes>
          <Spin w={91} h={22} text="12" off />
          <Field $w={101} $h={24} $off>
            <FieldText $pad={5}>px</FieldText>
            <ArrowBox $w={28} $c="#a0a0a0" />
          </Field>
        </SnapBoxes>
      );
  }
};

/* ---------- docks ---------- */

const Main = styled.main`
  display: flex;
  height: 812px;
  flex: none;
  border-top: 1px solid #b9b9b9;
`;
const Dock = styled.section<{ $w: number }>`
  width: ${(p) => p.$w}px;
  flex: none;
  display: flex;
  flex-direction: column;
`;
const DockTitle = styled.div<{ $pad: number }>`
  height: 22px;
  flex: none;
  display: flex;
  align-items: center;
  gap: 2.5px;
  padding: 0 2px 0 ${(p) => p.$pad}px;
  font-size: 14px;
  span { flex: 1; }
  svg { flex: none; }
`;
const DockButtons = () => (
  <>
    <svg width="12" height="12" viewBox="0 0 12 12" fill="none" stroke="#666">
      <rect x=".6" y=".6" width="10.800" height="10.800" rx="2" strokeWidth="1.200" />
      <rect x="3" y="5" width="4" height="4" rx=".5" />
      <path d="M5 4.500V3h4v4H7.500" />
    </svg>
    <svg width="12" height="12" viewBox="0 0 12 12" fill="none" stroke="#666">
      <rect x=".6" y=".6" width="10.800" height="10.800" rx="2" strokeWidth="1.200" />
      <path d="M3.300 3.300l5.400 5.400M8.700 3.300L3.300 8.700" stroke="#555" strokeWidth="2" />
    </svg>
  </>
);
const Splitter = styled.div<{ $w: number }>`
  width: ${(p) => p.$w}px;
  flex: none;
  display: flex;
  align-items: center;
  justify-content: center;
  &::before {
    content: "";
    width: 3px;
    height: 18px;
    background: radial-gradient(circle, #aaa 0.6px, transparent 0.9px) 0 0 / 3px 3px;
  }
`;
const LayerTools = styled.div`
  height: 29px;
  flex: none;
  display: flex;
  align-items: center;
  padding: 0 0 3px 3px;
  ${Tool} { width: 25.1px; height: 20px; padding: 0; border: 0; }
  svg { width: 16px; height: 16px; }
`;
const Tree = styled.div`
  height: 728px;
  flex: none;
  border: 1px solid #b4b4b4;
  background: #fff;
  font-size: 14px;
`;
const Row = styled.div<{ $sel?: boolean }>`
  height: 22px;
  display: flex;
  align-items: center;
  ${(p) => p.$sel && "background: linear-gradient(90deg, #0078d7 75px, transparent 75px), linear-gradient(#1a88e2, #0a7cda);"}
`;
const Expander = styled.span<{ $open?: boolean; $sel?: boolean; $none?: boolean }>`
  width: 28px;
  padding-left: ${(p) => (p.$open ? 7 : 10)}px;
  &::before {
    content: "";
    display: ${(p) => (p.$none ? "none" : "block")};
    width: 0;
    border: 5px solid transparent;
    ${(p) => (p.$open ? "border-bottom: 0; border-top-color: #5a5a5a;" : `border-right: 0; border-left-color: ${p.$sel ? "#0b2c4c" : "#5a5a5a"};`)}
  }
`;
const Glyph = styled.span`
  width: 18px;
  margin: 0 6px 0 8px;
  height: 17px;
  svg { display: block; width: 17px; height: 17px; overflow: visible; }
`;
const Name = styled.span<{ $kind?: "bold" | "muted" | "sel"; $ls?: number }>`
  flex: 1;
  padding-top: 1px;
  line-height: 20px;
  letter-spacing: ${(p) => p.$ls ?? 0}px;
  ${(p) => p.$kind && "font-weight: 700;"}
  ${(p) => p.$kind === "muted" && "font-style: italic; color: #7f7f7f;"}
  ${(p) => p.$kind === "sel" && "color: #e6f2fd; text-decoration: underline;"}
`;
const Operator = styled.span`
  font-weight: 600;
  letter-spacing: 3px;
  margin: 0 0 0 1px;
`;
const Swatch = styled.span`
  width: 19px;
  height: 19px;
  margin: 0 6px 0 6px;
  border: 1px solid #3a3010;
  background: #d4b43c;
`;
const Chip = styled.span`
  width: 19px;
  height: 19px;
  margin-right: 7px;
  border: 1px solid #dcdcdc;
  border-radius: 3px;
  background: #f3f3f3;
  display: flex;
  align-items: center;
  justify-content: center;
`;
const BandLabel = styled.div`
  height: 21px;
  padding: 1px 0 0 53px;
  line-height: 20px;
  letter-spacing: 0.15px;
`;
const RampRow = styled.div`
  display: flex;
  height: 102px;
  padding-left: 53px;
  margin-bottom: 1px;
`;
const Ramp = styled.div`
  width: 17px;
  margin-right: 5px;
  background: linear-gradient(#440154, #3b528b 25%, #21918c 50%, #5ec962 75%, #fde725);
`;
const RampTicks = styled.div`
  ${small}
  line-height: 15px;
  padding-top: 1px;
  display: flex;
  flex-direction: column;
  justify-content: space-between;
`;

const Raster = ({ sel }: { sel?: boolean }) => {
  const dark = sel ? "#1f4f80" : "#2c3e55";
  const light = sel ? "#78aee0" : "#b4cdea";
  const cells = [[1, 0, 1], [0, 1, 0], [1, 0, 0]];
  const tints = ["#cfe0f5", light];
  return (
    <svg viewBox="0 0 18 18">
      {[0, 1, 2].map((r) => [0, 1, 2].map((c) => (
        <rect key={`${r}${c}`} x={c * 6} y={r * 6} width="6" height="6"
          fill={cells[r][c] ? dark : sel ? light : tints[(r + c) % 2]} />
      )))}
    </svg>
  );
};
const Group = () => (
  <svg viewBox="0 0 18 18" fill="none" stroke="#808080">
    <path d="M4 8H.5v9.500h11V15" />
    <path d="M6 5H3.500v10h11v-3" fill="#eee" />
    <rect x="6.500" y="2" width="11" height="11" fill="#e4e4e4" />
    <path d="M9 6v5c0 2 3 2 3 0V2c0-2.500-3.500-2.500-3.500 0" stroke="#55697d" strokeWidth="1.300" />
  </svg>
);

const TabStrip = styled.div`
  ${small}
  display: flex;
  flex: none;
  height: 29px;
  align-items: flex-start;
  border-top: 1px solid #b0b0b0;
`;
const BottomTab = styled.span<{ $w: number; $on?: boolean }>`
  width: ${(p) => p.$w}px;
  height: ${(p) => (p.$on ? 29 : 27)}px;
  margin-top: -1px;
  padding-top: ${(p) => (p.$on ? 2 : 1)}px;
  display: flex;
  align-items: center;
  justify-content: center;
  border: 1px solid ${(p) => (p.$on ? "#a9a9a9" : "#bcbcbc")};
  border-top: ${(p) => (p.$on ? "0" : "1px solid #b0b0b0")};
  border-radius: 0 0 3px 3px;
  background: ${(p) => (p.$on ? "linear-gradient(#f0f0f0, #fbfbfb)" : "#dedede")};
`;

/* ---------- map ---------- */

const MapFrame = styled.div`
  width: 1110px;
  height: 808px;
  margin-top: 1px;
  flex: none;
  border: 1px solid #b4b4b4;
  svg { display: block; }
`;
const water = [
  "M1000 190h101v49h-101z",
  "M1439 306h8v68h-8v34h-68v-34h34v-34h34zM1439 441h8v101h-76v-33h34v-34h34z",
  "M832 408h33v67h-33v34h-34v-68h34z",
  "M1203 610h33v34h-33zM1000 644h34v33h-34z",
  "M697 644h67v67h-34v34h-101v-34h34v-34h34z",
  "M574 778h22v34h-34v-9h12z",
  "M359 981h20v20h-20z",
  "M663 745h101v33h68v-33h33v33h68v-33h101v-34h34v-67h33v-34h34v67h34v34h67v-34h135v101h34v-67h34v-101h8v391H933v-20h-68v20h-33v-20h-68v20H629v-20h-67v-68h34v-33h67z",
];
const dry = [
  "M865 812h68v68h-68zM1034 812h34v68h-34zM1439 812h8v34h-8zM798 913h34v34h-34zM764 947h34v34h-34z",
];
const MapCanvas = () => (
  <svg width="1108" height="806" viewBox="338 191 1108 806" shapeRendering="crispEdges">
    <rect x="338" y="191" width="1108" height="806" fill="#ffffcb" />
    <path fill="#253393" d={water.join("")} />
    <path fill="#ffffcb" d={dry.join("")} />
    <path fill="#000" d="M777 500h34v33h-34v68h-34v34h-33v-68h33v-34h34zM574 736h34v34h-34zM642 736h34v34h-34zM608 770h34v67h-34zM507 770h67v33h-33v34h33v34h-33v34h-68v-34h34zM439 905h34v34h34v33H372v-33h67z" />
    <path fill="#0b0b0b" d="M811 432h34v68h-34zM710 635h33v33h-33zM676 668h34v68h33v67h-33v-33h-34zM980 736h33v34h-33zM372 972h67v30h-67z" />
  </svg>
);

/* ---------- value tool ---------- */

const ValueBody = styled.div`
  ${small}
  display: flex;
  flex-direction: column;
  padding: 11px 11px 0 11px;
  height: 757px;
  flex: none;
`;
const CheckLine = styled.div`
  display: flex;
  align-items: center;
  gap: 6px;
  height: 17px;
  span + span { padding-top: 2px; }
`;
const TopTabs = styled.div`
  display: flex;
  align-items: flex-end;
  height: 29px;
  margin-top: 10px;
  position: relative;
`;
const TopTab = styled.span<{ $w: number; $on?: boolean }>`
  width: ${(p) => p.$w}px;
  height: ${(p) => (p.$on ? 30 : 27)}px;
  display: flex;
  align-items: center;
  justify-content: center;
  padding-top: ${(p) => (p.$on ? 1 : 3)}px;
  border: 1px solid ${(p) => (p.$on ? "#a9a9a9" : "#c0c0c0")};
  border-left-width: ${(p) => (p.$on ? 1 : 0)}px;
  border-bottom: 0;
  border-radius: 3px 3px 0 0;
  background: ${(p) => (p.$on ? "#fdfdfd" : "#e9e9e9")};
  margin-bottom: ${(p) => (p.$on ? -1 : 0)}px;
`;
const Pane = styled.div`
  width: 444px;
  height: 654px;
  border: 1px solid #a9a9a9;
  background: #fdfdfd;
  padding: 13px 12px 11px;
  display: flex;
  flex-direction: column;
`;
const DecimalLine = styled.div`
  display: flex;
  align-items: center;
  height: 22px;
  margin-bottom: 8px;
  gap: 6px;
`;
const DecimalLabel = styled.span`
  width: 58px;
  padding-top: 1px;
`;
const Grid = styled.div`
  flex: 1;
  border: 1px solid #b4b4b4;
  background: linear-gradient(90deg, #efefef 12px, #fff 12px);
  font-family: "Open Sans", sans-serif;
  font-size: 14px;
  letter-spacing: 0.1px;
`;
const GridHead = styled.div`
  height: 24px;
  display: flex;
  background: #efefef;
`;
const HeadCell = styled.span<{ $w: number; $pad?: number }>`
  width: ${(p) => p.$w}px;
  padding: 1px 0 0 ${(p) => p.$pad ?? 0}px;
  display: flex;
  align-items: center;
  justify-content: center;
  border-bottom: 1px solid #b4b4b4;
  border-right: 1px solid #c8c8c8;
  background: linear-gradient(#fdfdfd, #ededed);
`;
const GridRow = styled.div`
  height: 37px;
  display: flex;
`;
const Cell = styled.span<{ $w: number; $head?: boolean }>`
  width: ${(p) => p.$w}px;
  display: flex;
  align-items: center;
  padding-left: ${(p) => (p.$head ? 2 : 3)}px;
  border-right: 1px solid ${(p) => (p.$head ? "#a9a9a9" : "#c4c4c4")};
  border-bottom: 1px solid ${(p) => (p.$head ? "#a9a9a9" : "#c4c4c4")};
  background: ${(p) => (p.$head ? "linear-gradient(90deg, #fdfdfd, #ededed)" : "#fff")};
`;
const CoordLine = styled.div`
  height: 33px;
  display: flex;
  align-items: center;
`;

/* ---------- status bar ---------- */

const Status = styled.footer`
  ${small}
  flex: 1;
  display: flex;
  align-items: center;
  padding: 0 0 2px 4px;
`;
const Label = styled.span<{ $w: number; $pad?: number }>`
  width: ${(p) => p.$w}px;
  padding: 1px 0 0 ${(p) => p.$pad ?? 0}px;
  flex: none;
`;
const StatusIcon = styled.span<{ $w: number }>`
  width: ${(p) => p.$w}px;
  flex: none;
  display: flex;
  justify-content: center;
  svg { display: block; overflow: visible; }
`;

const menus: [string, string, string, number][] = [
  ["Pro", "j", "ect", 61], ["", "E", "dit", 41], ["", "V", "iew", 47], ["", "L", "ayer", 50], ["", "S", "ettings", 68],
  ["", "P", "lugins", 62], ["Vect", "o", "r", 57], ["", "R", "aster", 56], ["", "D", "atabase", 77], ["", "W", "eb", 46],
  ["", "M", "esh", 50], ["HCMGIS", "", "", 70], ["Pro", "c", "essing", 85], ["", "H", "elp", 40],
];

const valueRows = [["1", "HRSL_DSM", "0.0"], ["2", "<= 20m", "0.0"], ["3", "Clipped_HRSL_HCMC_Pops...", "7.23..."]];

export default function App() {
  return (
    <Window>
      <GlobalStyle />
      <TitleBar>
        <svg width="23" height="23" viewBox="0 0 23 23" fill="none">
          <circle cx="11.500" cy="11.500" r="7.700" stroke="#589632" strokeWidth="4.200" />
          <path d="M12 12l9 10h-5.500l-5-6z" fill="#93b023" />
          <path d="M9 9h4.500l3 3-2.500 2.500-3.500-3z" fill="#ee7913" />
        </svg>
        <TitleText>*SchoolOfData — QGIS</TitleText>
        <WindowControls>
          <svg viewBox="0 0 58 28" fill="none" stroke="#000"><path d="M23.500 13.500h12" /></svg>
          <svg viewBox="0 0 58 28" fill="none" stroke="#000"><path d="M22.500 11.500h9v9h-9zM24.500 11.500v-2h9v9h-2" /></svg>
          <svg viewBox="0 0 58 28" fill="none" stroke="#000" strokeWidth="1.100"><path d="M23 8.500l11.500 11.500M34.500 8.500L23 20" /></svg>
        </WindowControls>
      </TitleBar>
      <MenuBar>
        {menus.map(([a, u, b, w]) => (
          <MenuItem key={a + u + b} $w={w}>{a}<u>{u}</u>{b}</MenuItem>
        ))}
      </MenuBar>
      <ToolBar $h={39}>{row1.map((it, i) => <ToolItem key={i} it={it} />)}</ToolBar>
      <ToolBar $h={39}>{row2.map((it, i) => <ToolItem key={i} it={it} />)}</ToolBar>
      <ToolBar $h={39}>{row3.map((it, i) => <ToolItem key={i} it={it} />)}</ToolBar>
      <ToolBar $h={18}><Handle $w={11} $h={16} /></ToolBar>

      <Main>
        <Dock $w={330}>
          <DockTitle $pad={4}><span>Layers</span><DockButtons /></DockTitle>
          <LayerTools>
            <Tool><I><path d="M13 12L22 2" stroke="#c98a3c" strokeWidth="3" /><path d="M2 8l10 3 5 5-5 6c-5 0-9-5-10-14z" fill="#f29a2e" /><path d="M2 8l5 2 2 8c-4-2-6-5-7-10z" fill="#e0483e" /><path d="M9 10l4 2-2 7z" fill="#4f8ad0" /></I></Tool>
            <Tool><Group /></Tool>
            <Tool><I><path d="M1 12C6 3 18 3 23 12 18 20 6 20 1 12z" fill="#e3e8ec" stroke="#888" strokeWidth="1.500" /><circle cx="12" cy="11" r="5" fill="#4e749e" /><circle cx="12" cy="11" r="2" fill="#222" /><path d="M14 16h13l-6.500 7z" fill="#444" /></I></Tool>
            <Tool><I><path d="M2 4h20l-7 9v10l-6-3v-7z" fill="#5a88bd" stroke="#47709f" /><path d="M1 2.500h22" stroke="#f4d84a" strokeWidth="4" /><path d="M14 16h13l-6.500 7z" fill="#444" /></I></Tool>
            <Tool $off><I><text x="0" y="15" fontSize="26" fontFamily="Liberation Serif" fill="#777">ε</text><path d="M14 22V13h9v9" stroke="#777" strokeWidth="2.500" /></I></Tool>
            <ArrowBox $w={12} $c="#a3a3a3" />
            <Gap $w={2.5} />
            <Tool><I><path d="M3 2v20M3 7h5M3 19h5M3 2h7" stroke="#888" strokeWidth="1.800" /><rect x="6" y="6" width="5" height="5" fill="#f0a52a" /><rect x="6" y="16" width="5" height="5" fill="#f0a52a" /><path d="M14 1h5v12h4l-6.500 8-6.500-8h4z" fill="#5583b9" stroke="#2d5687" /></I></Tool>
            <Tool><I><path d="M3 2v20M3 7h5M3 19h5M3 2h7" stroke="#888" strokeWidth="1.800" /><rect x="6" y="6" width="5" height="5" fill="#f0a52a" /><rect x="6" y="16" width="5" height="5" fill="#f0a52a" /><path d="M14 21h5V9h4l-6.500-8L10 9h4z" fill="#5583b9" stroke="#2d5687" /></I></Tool>
            <Tool><I><rect x="1" y="1" width="17" height="17" fill="#f7f7f7" stroke="#888" strokeWidth="1.600" /><rect x="14" y="15" width="10" height="8" rx="2" fill="#e84a4a" /><path d="M16.500 19h5" stroke="#fff" strokeWidth="2" /></I></Tool>
          </LayerTools>
          <Tree>
            <Row><Expander /><Check /><Glyph><Group /></Glyph><Name>LandCover_9210</Name></Row>
            <Row $sel><Expander $sel /><Check on /><Glyph><Raster sel /></Glyph><Name $kind="sel" $ls={0.4}>HRSL_DSM</Name></Row>
            <Row>
              <Expander /><Check on /><Glyph><Raster /></Glyph><Name $kind="bold" $ls={0.2}><Operator>&lt;=</Operator> 20m</Name>
              <Chip>
                <svg width="13" height="11" viewBox="0 0 13 11" fill="none" stroke="#808080"><path d="M3 0v11M5.500 0v11M8 0v11M10.500 0v11" /><rect x=".7" y="2.500" width="11.600" height="6" fill="#f3f3f3" strokeWidth="1.300" /></svg>
              </Chip>
            </Row>
            <Row><Expander /><Check on /><Glyph><Raster /></Glyph><Name $kind="bold" $ls={0.28}>Clipped_HRSL_HCMC_Pops_9210</Name></Row>
            <Row><Expander $open /><Check /><Glyph><Raster /></Glyph><Name $kind="muted" $ls={0.87}>Clipped_SRTM_9210</Name></Row>
            <BandLabel>Band 1 (Gray)</BandLabel>
            <RampRow><Ramp /><RampTicks><span>44</span><span>-26</span></RampTicks></RampRow>
            <Row><Expander $none /><Check /><Swatch /><Name $kind="muted" $ls={0.85}>HCMC_admin_boundary_9210</Name></Row>
          </Tree>
          <TabStrip>
            <BottomTab $w={77}>Browser</BottomTab>
            <BottomTab $w={67} $on>Layers</BottomTab>
          </TabStrip>
        </Dock>
        <Splitter $w={7} />
        <MapFrame><MapCanvas /></MapFrame>
        <Splitter $w={7} />
        <Dock $w={466}>
          <DockTitle $pad={4}><span>Value Tool</span><DockButtons /></DockTitle>
          <ValueBody>
            <CheckLine><Check on /><span>Enable</span></CheckLine>
            <TopTabs>
              <TopTab $w={63} $on>Table</TopTab>
              <TopTab $w={64}>Graph</TopTab>
              <TopTab $w={72}>Options</TopTab>
            </TopTabs>
            <Pane>
              <DecimalLine>
                <Check /><DecimalLabel>Decimals</DecimalLabel>
                <Spin w={42} h={22} text="2" pad={4} />
              </DecimalLine>
              <Grid>
                <GridHead>
                  <HeadCell $w={213} $pad={13}>Layer</HeadCell>
                  <HeadCell $w={50}>Value</HeadCell>
                </GridHead>
                {valueRows.map(([n, name, v]) => (
                  <GridRow key={n}>
                    <Cell $w={13} $head>{n}</Cell>
                    <Cell $w={200}>{name}</Cell>
                    <Cell $w={50}>{v}</Cell>
                  </GridRow>
                ))}
              </Grid>
            </Pane>
            <CoordLine>Coordinate:577378.7227463771,1228018.1617168323,7.238517829434324</CoordLine>
          </ValueBody>
          <TabStrip>
            <BottomTab $w={92} $on>Value Tool</BottomTab>
            <BottomTab $w={103}>Layer Styling</BottomTab>
            <BottomTab $w={139}>Processing Toolbox</BottomTab>
          </TabStrip>
        </Dock>
      </Main>

      <Status>
        <Field $w={232}>
          <StatusIcon $w={30}>
            <svg width="13" height="13" viewBox="0 0 13 13" fill="none" stroke="#8a8a8a"><circle cx="5" cy="5" r="4" strokeWidth="1.300" /><path d="M8 8l4 4" strokeWidth="2" /></svg>
          </StatusIcon>
          <FieldText $pad={0} $hint>Type to locate (Ctrl+K)</FieldText>
        </Field>
        <Label $w={796} $pad={731}>Coordinate</Label>
        <Field $w={132}><FieldText $pad={6}>577378.7,1228018.2</FieldText></Field>
        <StatusIcon $w={27}>
          <svg width="20" height="22" viewBox="0 0 20 22" fill="none" stroke="#222">
            <path d="M4 3l4-2 4 8 4 6c1 4-3 6-5 4L6 11z" fill="#eee" strokeWidth="1.500" /><path d="M5 3l5 8M8 2l4 8M5 7l4-2M7 11l4-3M10 15l5-3" strokeWidth="1.600" /><circle cx="13" cy="16.500" r="2" /><path d="M15 3l3-2M15 6h2M2 14l2-1M1 18l3-1" />
          </svg>
        </StatusIcon>
        <Label $w={44} $pad={10}>Scale</Label>
        <Field $w={93}>
          <FieldText $pad={3}>1:4280</FieldText>
          <ArrowBox $w={28} $c="#666" />
        </Field>
        <StatusIcon $w={37}>
          <svg width="16" height="19" viewBox="0 0 16 19" fill="none"><path d="M3.500 9V5.500a4.500 4.500 0 0 1 9 0V9" stroke="#888" strokeWidth="2" /><rect x="0.500" y="8" width="15" height="11" rx="1" fill="#6a6a6a" /></svg>
        </StatusIcon>
        <Label $w={56}>Magnifier</Label>
        <Spin w={93} h={24} text="100%" pad={4} />
        <Label $w={65} $pad={9}>Rotation</Label>
        <Spin w={89} h={24} text="0.0 °" pad={4} />
        <Gap $w={6} />
        <Check on />
        <Label $w={64} $pad={6}>Render</Label>
        <StatusIcon $w={20}>
          <svg width="20" height="18" viewBox="0 0 20 18" fill="none" stroke="#666" strokeWidth="1.200"><ellipse cx="10" cy="8" rx="9" ry="7.200" fill="#aaa" /><ellipse cx="10" cy="8" rx="4" ry="7.200" /><path d="M10 1v14M1 8h18M3 4h14M3 12h14M6 17h8" /></svg>
        </StatusIcon>
        <Label $w={88} $pad={4}>EPSG:9210</Label>
        <StatusIcon $w={20}>
          <svg width="20" height="19" viewBox="0 0 20 19"><path d="M10 1c5 0 9 3 9 7.500 0 2-1 4-2 5l1 5-5-2.500C7 17 1 13 1 8.500S5 1 10 1z" fill="#666" /><g fill="#f0f0f0"><circle cx="6" cy="8.500" r="1.200" /><circle cx="10" cy="8.500" r="1.200" /><circle cx="14" cy="8.500" r="1.200" /></g></svg>
        </StatusIcon>
        <Gap $w={13} />
        <StatusIcon $w={21}>
          <svg width="22" height="18" viewBox="0 0 22 18" fill="#b5b5b5" stroke="#777" strokeWidth="1.200"><path d="M1 4h5c-1-3 4-3 4 0h4v4c3-1 4 4 0 3v6H9c0-3-3-3-3 0H1v-4c3 0 3-4 0-4z" /><path d="M13 8c4 1 7-1 6-5-2 0-2-2 0-2.500 3 1 3 7-1 8.500" fill="#eee" /></svg>
        </StatusIcon>
      </Status>
    </Window>
  );
}
